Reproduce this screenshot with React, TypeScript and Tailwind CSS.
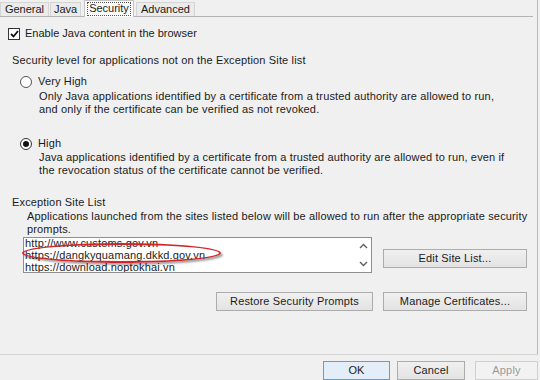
const font = { fontFamily: '"Liberation Sans", Arial, sans-serif' };

function Chevron({ up }: { up?: boolean }) {
  return (
    <svg width="9" height="6" viewBox="0 0 9 6" className="block">
      <path d={up ? "M1 5 L4.5 1.5 L8 5" : "M1 1 L4.5 4.5 L8 1"} fill="none" stroke="#606060" strokeWidth="1.4" />
    </svg>
  );
}

function Btn({ children, className = "", disabled, primary }: { children: React.ReactNode; className?: string; disabled?: boolean; primary?: boolean }) {
  return (
    <div
      className={
        "h-[19px] flex items-center justify-center border text-[11px] " +
        (primary
          ? "border-[#5e9fd6] bg-[#e3eef9] text-[#1b1b1b] "
          : disabled
          ? "border-[#cfcfcf] bg-[#f2f2f2] text-[#9a9a9a] "
          : "border-[#acacac] bg-gradient-to-b from-[#f0f0f0] to-[#e3e3e3] text-[#1b1b1b] ") +
        className
      }
    >
      {children}
    </div>
  );
}

export default function App() {
  return (
    <div className="w-[540px] h-[380px] bg-[#f0f0f0] overflow-hidden flex flex-col text-[11px] tracking-[0.15px] text-[#1b1b1b]" style={font}>
      <div className="w-[538px] h-[355px] border-r border-[#b9b9b9] flex flex-col">
        {/* Tabs */}
        <div className="h-[16px] flex items-end relative z-10 tracking-normal">
          <div className="h-[14px] w-[49px] border border-b-0 border-[#d4d4d4] bg-[#ebebeb] flex items-center justify-center leading-none">General</div>
          <div className="h-[14px] w-[31px] ml-[1px] border border-b-0 border-[#d4d4d4] bg-[#ebebeb] flex items-center justify-center leading-none">Java</div>
          <div className="h-[17px] w-[50px] ml-[3px] border border-b-0 border-[#c4c4c4] bg-[#fbfbfb] flex items-center justify-center leading-none mb-[-1px]">
            <span className="outline outline-1 outline-dotted outline-[#555] px-[1px] pb-[1px]">Security</span>
          </div>
          <div className="h-[14px] w-[59px] ml-[2px] border border-b-0 border-[#d4d4d4] bg-[#ebebeb] flex items-center justify-center leading-none">Advanced</div>
        </div>

        {/* Panel */}
        <div className="flex-1 border-t border-[#b3b3b3] mr-[4px] flex flex-col leading-[13px]">
          <div className="mt-[10px] ml-[8px] flex items-center h-[13px]">
            <div className="w-[12px] h-[12px] border border-[#333] bg-white flex items-center justify-center">
              <svg width="9" height="8" viewBox="0 0 9 8">
                <path d="M1 4 L3.5 6.5 L8 1" fill="none" stroke="#111" strokeWidth="1.8" />
              </svg>
            </div>
            <span className="ml-[5px] tracking-normal">Enable Java content in the browser</span>
          </div>

          <div className="mt-[14px] ml-[12px]">Security level for applications not on the Exception Site list</div>

          <div className="mt-[8px] ml-[20px] flex items-center h-[13px]">
            <div className="w-[12px] h-[12px] rounded-full border border-[#555] bg-white" />
            <span className="ml-[6px]">Very High</span>
          </div>
          <div className="mt-[2px] ml-[39px]">
            Only Java applications identified by a certificate from a trusted authority are allowed to run,
            <br />
            and only if the certificate can be verified as not revoked.
          </div>

          <div className="mt-[21px] ml-[20px] flex items-center h-[13px]">
            <div className="w-[12px] h-[12px] rounded-full border border-[#333] bg-white flex items-center justify-center">
              <div className="w-[6px] h-[6px] rounded-full bg-[#111]" />
            </div>
            <span className="ml-[6px]">High</span>
          </div>
          <div className="mt-[1px] ml-[39px]">
            Java applications identified by a certificate from a trusted authority are allowed to run, even if
            <br />
            the revocation status of the certificate cannot be verified.
          </div>

          <div className="mt-[19px] ml-[12px]">Exception Site List</div>
          <div className="mt-[1px] ml-[27px]">
            Applications launched from the sites listed below will be allowed to run after the appropriate security
            <br />
            prompts.
          </div>

          <div className="mt-[1px] ml-[23px] flex">
            <div className="relative w-[349px] h-[36px] border border-[#8f8f8f] bg-white flex">
              <div className="flex-1 overflow-hidden leading-[12px] pl-[1px] pt-0">
                <div className="-mt-[1px]">http://www.customs.gov.vn</div>
                <div>https://dangkyquamang.dkkd.gov.vn</div>
                <div>https://download.noptokhai.vn</div>
              </div>
              <div className="w-[16px] flex flex-col items-center justify-between py-[5px]">
                <Chevron up />
                <Chevron />
              </div>
              <div className="absolute left-[-2px] top-[5px] w-[199px] h-[20px] rounded-[50%] border-2 border-[#d0262b] shadow-[2px_2px_2px_rgba(0,0,0,0.35)]" />
            </div>
            <Btn className="w-[144px] ml-[11px] mt-[12px]">Edit Site List...</Btn>
          </div>

          <div className="mt-[19px] flex justify-end mr-[6px] gap-[10px]">
            <Btn className="w-[157px]">Restore Security Prompts</Btn>
            <Btn className="w-[144px]">Manage Certificates...</Btn>
          </div>
        </div>
      </div>

      {/* Footer */}
      <div className="w-[538px] border-t border-[#d5d5d5] h-[1px] bg-white" />
      <div className="flex justify-end mt-[6px] pr-[2px]">
        <Btn primary className="w-[67px]">OK</Btn>
        <Btn className="w-[68px] ml-[7px]">Cancel</Btn>
        <Btn disabled className="w-[63px] ml-[10px]">Apply</Btn>
      </div>
    </div>
  );
}
